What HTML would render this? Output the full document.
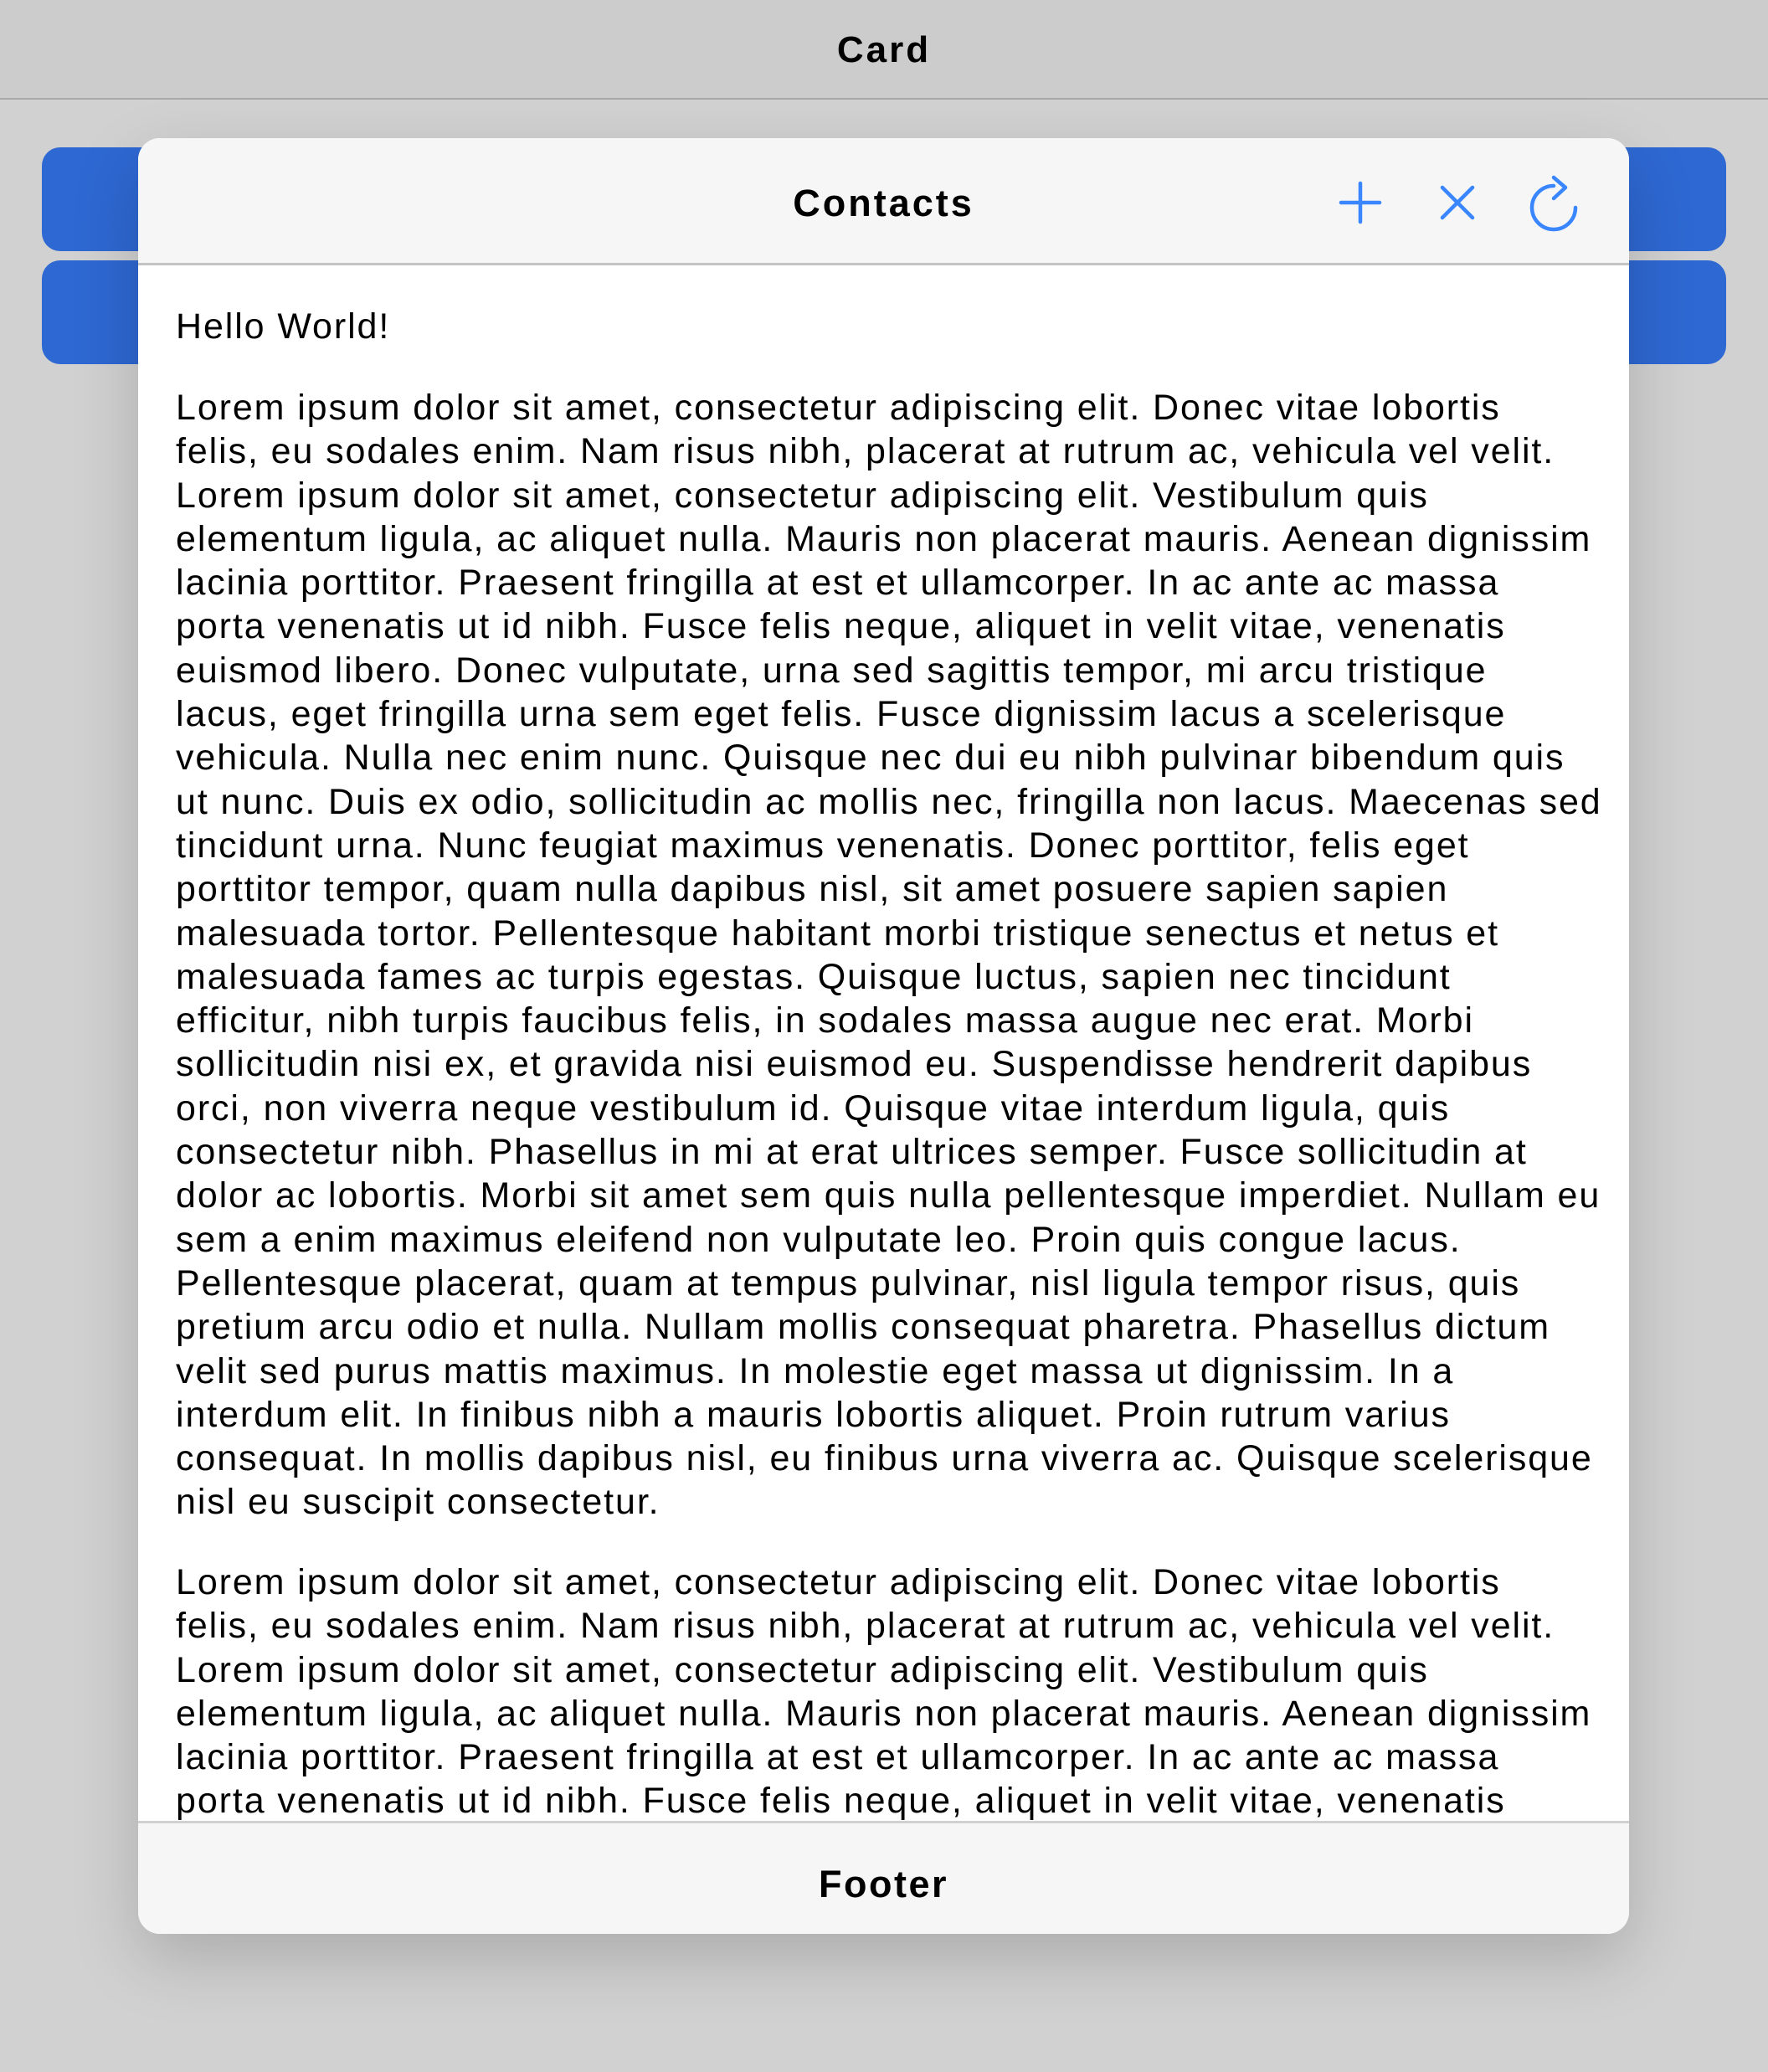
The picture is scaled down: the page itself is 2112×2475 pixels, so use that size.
<!DOCTYPE html>
<html><head><meta charset="utf-8"><style>
*{margin:0;padding:0;box-sizing:border-box}
body{width:2112px;height:2475px;background:#d1d1d1;position:relative;overflow:hidden;font-family:"Liberation Sans",sans-serif}
.top{position:absolute;left:0;top:0;width:2112px;height:119px;background:#cccccc;border-bottom:2px solid #a9a9a9;text-align:center;font-weight:bold;font-size:44px;line-height:120px;color:#000;letter-spacing:3px}
.btn{position:absolute;left:50px;width:2012px;background:#2e68d2;border-radius:22px}
.card{position:absolute;left:165px;top:165px;width:1781px;height:2145px;background:#fff;border-radius:26px;overflow:hidden;box-shadow:0 30px 80px rgba(0,0,0,.18)}
.hdr{position:absolute;left:0;top:0;width:100%;height:152px;background:#f6f6f6;border-bottom:3px solid #c4c4c4}
.hdr .t{position:absolute;left:0;right:0;top:0;line-height:156px;text-align:center;font-weight:bold;font-size:45px;color:#000;letter-spacing:3px}
.ftr{position:absolute;left:0;bottom:0;width:100%;height:135px;background:#f6f6f6;border-top:3px solid #d0d0d0;text-align:center;font-weight:bold;font-size:45px;line-height:146px;color:#000;letter-spacing:2.5px}
.txt{position:absolute;left:45px;font-size:43px;line-height:52.3px;color:#000;white-space:nowrap;letter-spacing:1.9px}
</style></head><body>
<div class="top">Card</div>
<div class="btn" style="top:176px;height:124px"></div>
<div class="btn" style="top:311px;height:124px"></div>
<div class="card">
<div class="txt" style="top:199px">Hello World!</div>
<div class="txt" style="top:296px">Lorem ipsum dolor sit amet, consectetur adipiscing elit. Donec vitae lobortis<br>felis, eu sodales enim. Nam risus nibh, placerat at rutrum ac, vehicula vel velit.<br>Lorem ipsum dolor sit amet, consectetur adipiscing elit. Vestibulum quis<br>elementum ligula, ac aliquet nulla. Mauris non placerat mauris. Aenean dignissim<br>lacinia porttitor. Praesent fringilla at est et ullamcorper. In ac ante ac massa<br>porta venenatis ut id nibh. Fusce felis neque, aliquet in velit vitae, venenatis<br>euismod libero. Donec vulputate, urna sed sagittis tempor, mi arcu tristique<br>lacus, eget fringilla urna sem eget felis. Fusce dignissim lacus a scelerisque<br>vehicula. Nulla nec enim nunc. Quisque nec dui eu nibh pulvinar bibendum quis<br>ut nunc. Duis ex odio, sollicitudin ac mollis nec, fringilla non lacus. Maecenas sed<br>tincidunt urna. Nunc feugiat maximus venenatis. Donec porttitor, felis eget<br>porttitor tempor, quam nulla dapibus nisl, sit amet posuere sapien sapien<br>malesuada tortor. Pellentesque habitant morbi tristique senectus et netus et<br>malesuada fames ac turpis egestas. Quisque luctus, sapien nec tincidunt<br>efficitur, nibh turpis faucibus felis, in sodales massa augue nec erat. Morbi<br>sollicitudin nisi ex, et gravida nisi euismod eu. Suspendisse hendrerit dapibus<br>orci, non viverra neque vestibulum id. Quisque vitae interdum ligula, quis<br>consectetur nibh. Phasellus in mi at erat ultrices semper. Fusce sollicitudin at<br>dolor ac lobortis. Morbi sit amet sem quis nulla pellentesque imperdiet. Nullam eu<br>sem a enim maximus eleifend non vulputate leo. Proin quis congue lacus.<br>Pellentesque placerat, quam at tempus pulvinar, nisl ligula tempor risus, quis<br>pretium arcu odio et nulla. Nullam mollis consequat pharetra. Phasellus dictum<br>velit sed purus mattis maximus. In molestie eget massa ut dignissim. In a<br>interdum elit. In finibus nibh a mauris lobortis aliquet. Proin rutrum varius<br>consequat. In mollis dapibus nisl, eu finibus urna viverra ac. Quisque scelerisque<br>nisl eu suscipit consectetur.</div>
<div class="txt" style="top:1699px">Lorem ipsum dolor sit amet, consectetur adipiscing elit. Donec vitae lobortis<br>felis, eu sodales enim. Nam risus nibh, placerat at rutrum ac, vehicula vel velit.<br>Lorem ipsum dolor sit amet, consectetur adipiscing elit. Vestibulum quis<br>elementum ligula, ac aliquet nulla. Mauris non placerat mauris. Aenean dignissim<br>lacinia porttitor. Praesent fringilla at est et ullamcorper. In ac ante ac massa<br>porta venenatis ut id nibh. Fusce felis neque, aliquet in velit vitae, venenatis<br>euismod libero.</div>
<div class="hdr"><div class="t">Contacts</div></div>
<div class="ftr">Footer</div>
</div>
<svg style="position:absolute;left:0;top:0" width="2112" height="400" fill="none" stroke="#3a86ff" stroke-width="4.5" stroke-linecap="round" stroke-linejoin="round">
<path d="M1625 219V265M1602 242H1648"/>
<path d="M1723 224L1759 260M1759 224L1723 260"/>
<path d="M1856 222A26 26 0 1 0 1882 248"/>
<path d="M1856 212L1870 224L1856 237"/>
</svg>
</body></html>
